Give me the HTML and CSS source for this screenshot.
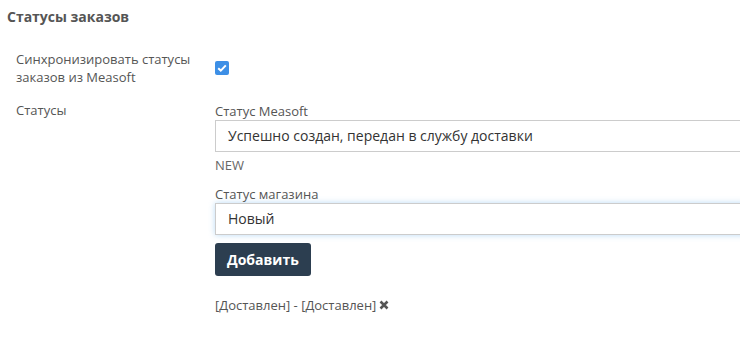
FILE: index.html
```html
<!DOCTYPE html>
<html lang="ru">
<head>
    <meta charset="UTF-8">
    <title>Статусы заказов</title>
    <link rel="stylesheet" href="styles.css">
</head>
<body>

    <h3 class="section-title">Статусы заказов</h3>

    <div class="form-row sync-row">
        <label class="row-label">Синхронизировать статусы заказов из Measoft</label>
        <div class="row-value">
            <span class="checkbox">
                <svg width="10" height="8" viewBox="0 0 10 8"><path d="M1.2 4.2 L3.8 6.6 L8.8 1.4" fill="none" stroke="#fff" stroke-width="2"/></svg>
            </span>
        </div>
    </div>

    <div class="form-row statuses-row">
        <label class="row-label">Статусы</label>
        <div class="row-value">
            <div class="field-label">Статус Measoft</div>
            <div class="text-input">Успешно создан, передан в службу доставки</div>
            <div class="code-hint">NEW</div>

            <div class="field-label shop-label">Статус магазина</div>
            <div class="text-input focused">Новый</div>

            <button class="add-btn">Добавить</button>

            <div class="mapping">
                [Доставлен] - [Доставлен]
                <svg class="remove-icon" width="10" height="10" viewBox="0 0 10 10"><path d="M1.5 1.5 L8.5 8.5 M8.5 1.5 L1.5 8.5" stroke="#555" stroke-width="2.6"/></svg>
            </div>
        </div>
    </div>

</body>
</html>
```

FILE: styles.css
```css
body {
    margin: 0;
    font-family: "Open Sans", "Liberation Sans", sans-serif;
    font-size: 13px;
    color: #555;
    background-color: #fff;
    overflow: hidden;
}
.section-title {
    margin: 0;
    padding: 8px 7px;
    font-size: 14px;
    font-weight: bold;
    line-height: 18px;
    color: #555;
}
.form-row {
    display: grid;
    grid-template-columns: 199px 1fr;
    padding-left: 16px;
}
.sync-row {
    margin-top: 16px;
    align-items: center;
}
.statuses-row {
    margin-top: 15px;
}
.row-label {
    line-height: 18px;
}
.checkbox {
    display: flex;
    align-items: center;
    justify-content: center;
    width: 14px;
    height: 14px;
    border-radius: 2px;
    background-color: #3d8fe6;
    margin-top: -1px;
}
.field-label {
    line-height: 18px;
    margin-top: 1px;
}
.shop-label {
    margin-top: 11px;
}
.text-input {
    height: 30px;
    line-height: 30px;
    border: 1px solid #ccc;
    border-right: none;
    padding-left: 12px;
    font-size: 14px;
    color: #333;
    margin-right: -10px;
}
.text-input.focused {
    box-shadow: 0 0 6px rgba(102, 175, 233, 0.45);
}
.code-hint {
    margin-top: 4px;
    line-height: 18px;
    color: #666;
}
.add-btn {
    display: block;
    margin-top: 8px;
    height: 33px;
    padding: 0 12px;
    border: none;
    border-radius: 3px;
    background-color: #2c3e50;
    color: white;
    font-family: "Open Sans", "Liberation Sans", sans-serif;
    font-size: 14px;
    font-weight: bold;
    cursor: pointer;
}
.mapping {
    margin-top: 20px;
    line-height: 18px;
    color: #555;
    display: flex;
    align-items: center;
    gap: 3px;
}
.remove-icon {
    display: block;
}
```
